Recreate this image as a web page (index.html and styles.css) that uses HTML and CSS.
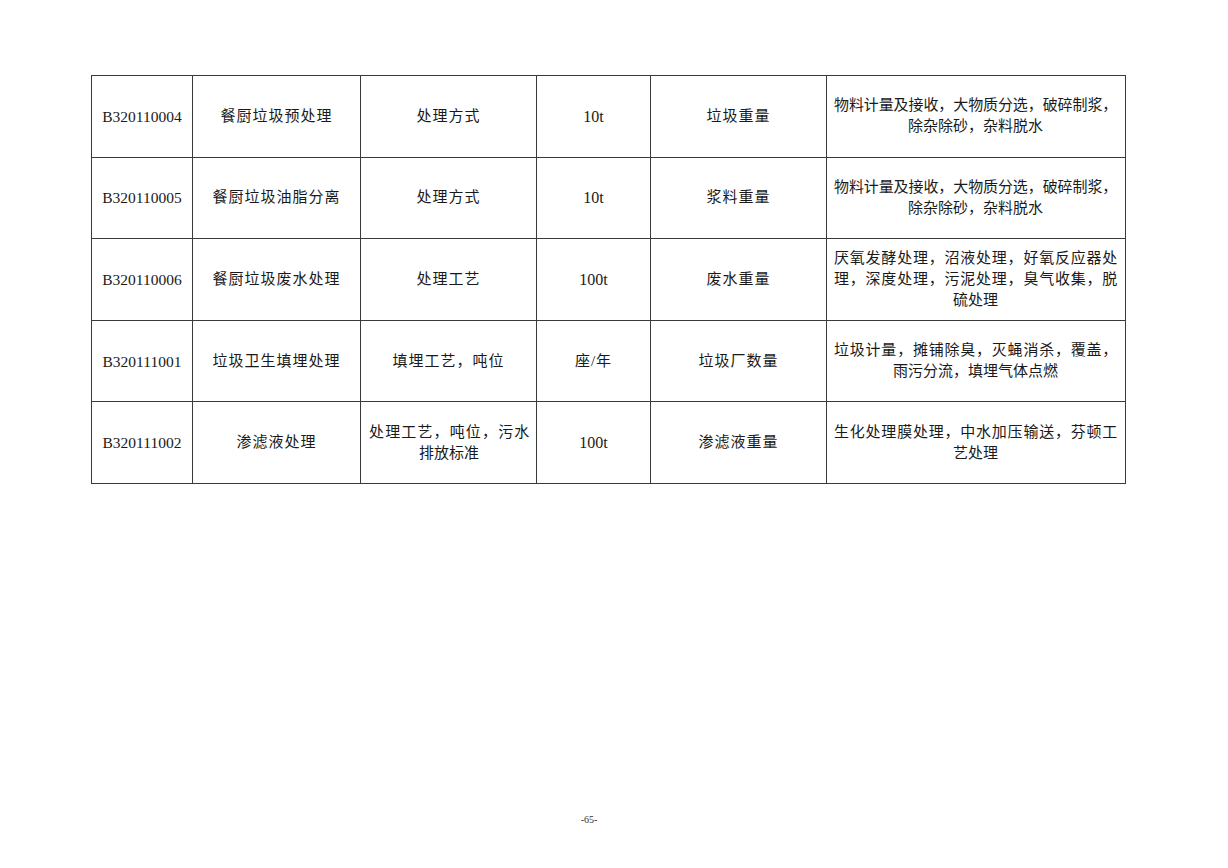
FILE: index.html
```html
<!DOCTYPE html>
<html lang="zh">
<head>
<meta charset="utf-8">
<link rel="stylesheet" href="styles.css">
</head>
<body>
<div class="page">
  <table class="grid">
    <colgroup>
      <col class="c1"><col class="c2"><col class="c3"><col class="c4"><col class="c5"><col class="c6">
    </colgroup>
    <tr>
      <td class="code">B320110004</td>
      <td class="sp">餐厨垃圾预处理</td>
      <td class="sp">处理方式</td>
      <td class="num">10t</td>
      <td class="sp">垃圾重量</td>
      <td class="desc"><div class="jl">物料计量及接收，大物质分选，破碎制浆，</div><div class="cl">除杂除砂，杂料脱水</div></td>
    </tr>
    <tr>
      <td class="code">B320110005</td>
      <td class="sp">餐厨垃圾油脂分离</td>
      <td class="sp">处理方式</td>
      <td class="num">10t</td>
      <td class="sp">浆料重量</td>
      <td class="desc"><div class="jl">物料计量及接收，大物质分选，破碎制浆，</div><div class="cl">除杂除砂，杂料脱水</div></td>
    </tr>
    <tr>
      <td class="code">B320110006</td>
      <td class="sp">餐厨垃圾废水处理</td>
      <td class="sp">处理工艺</td>
      <td class="num">100t</td>
      <td class="sp">废水重量</td>
      <td class="desc"><div class="jl">厌氧发酵处理，沼液处理，好氧反应器处</div><div class="jl">理，深度处理，污泥处理，臭气收集，脱</div><div class="cl">硫处理</div></td>
    </tr>
    <tr>
      <td class="code">B320111001</td>
      <td class="sp">垃圾卫生填埋处理</td>
      <td class="sp">填埋工艺，吨位</td>
      <td class="sp">座/年</td>
      <td class="sp">垃圾厂数量</td>
      <td class="desc"><div class="jl">垃圾计量，摊铺除臭，灭蝇消杀，覆盖，</div><div class="cl">雨污分流，填埋气体点燃</div></td>
    </tr>
    <tr>
      <td class="code">B320111002</td>
      <td class="sp">渗滤液处理</td>
      <td class="desc3"><div class="jl">处理工艺，吨位，污水</div><div class="cl">排放标准</div></td>
      <td class="num">100t</td>
      <td class="sp">渗滤液重量</td>
      <td class="desc"><div class="jl">生化处理膜处理，中水加压输送，芬顿工</div><div class="cl">艺处理</div></td>
    </tr>
  </table>
  <div class="folio">-65-</div>
</div>
</body>
</html>
```

FILE: styles.css
```css
html, body {
  margin: 0;
  padding: 0;
  background: #ffffff;
}

body {
  width: 1228px;
  height: 868px;
  overflow: hidden;
  font-family: "Liberation Serif", "Noto Sans CJK SC", serif;
  color: #1a1a1a;
}

.page {
  padding: 75px 0 0 91px;
  position: relative;
  height: 793px;
}

.grid {
  border-collapse: collapse;
  table-layout: fixed;
  width: 1034px;
}

.c1 { width: 101px; }
.c2 { width: 168px; }
.c3 { width: 176px; }
.c4 { width: 114px; }
.c5 { width: 176px; }
.c6 { width: 299px; }

.grid td {
  border: 1px solid #3a3a3a;
  height: 80.6px;
  padding: 0;
  text-align: center;
  vertical-align: middle;
  font-size: 15px;
  line-height: 21px;
}

.grid td.code {
  font-size: 15.5px;
  padding-left: 0;
}

.grid td.sp {
  letter-spacing: 1px;
}

.grid td.num {
  font-size: 16px;
}

.grid td.desc {
  padding: 0 8px 0 7px;
}

.grid td.desc3 {
  padding: 0 7px 0 8px;
}

.jl {
  text-align: justify;
  text-align-last: justify;
  white-space: nowrap;
  letter-spacing: -0.3px;
}

.cl {
  text-align: center;
  white-space: nowrap;
}

.folio {
  position: absolute;
  left: 578px;
  top: 814px;
  width: 22px;
  text-align: center;
  font-size: 10px;
  color: #333;
}
```
